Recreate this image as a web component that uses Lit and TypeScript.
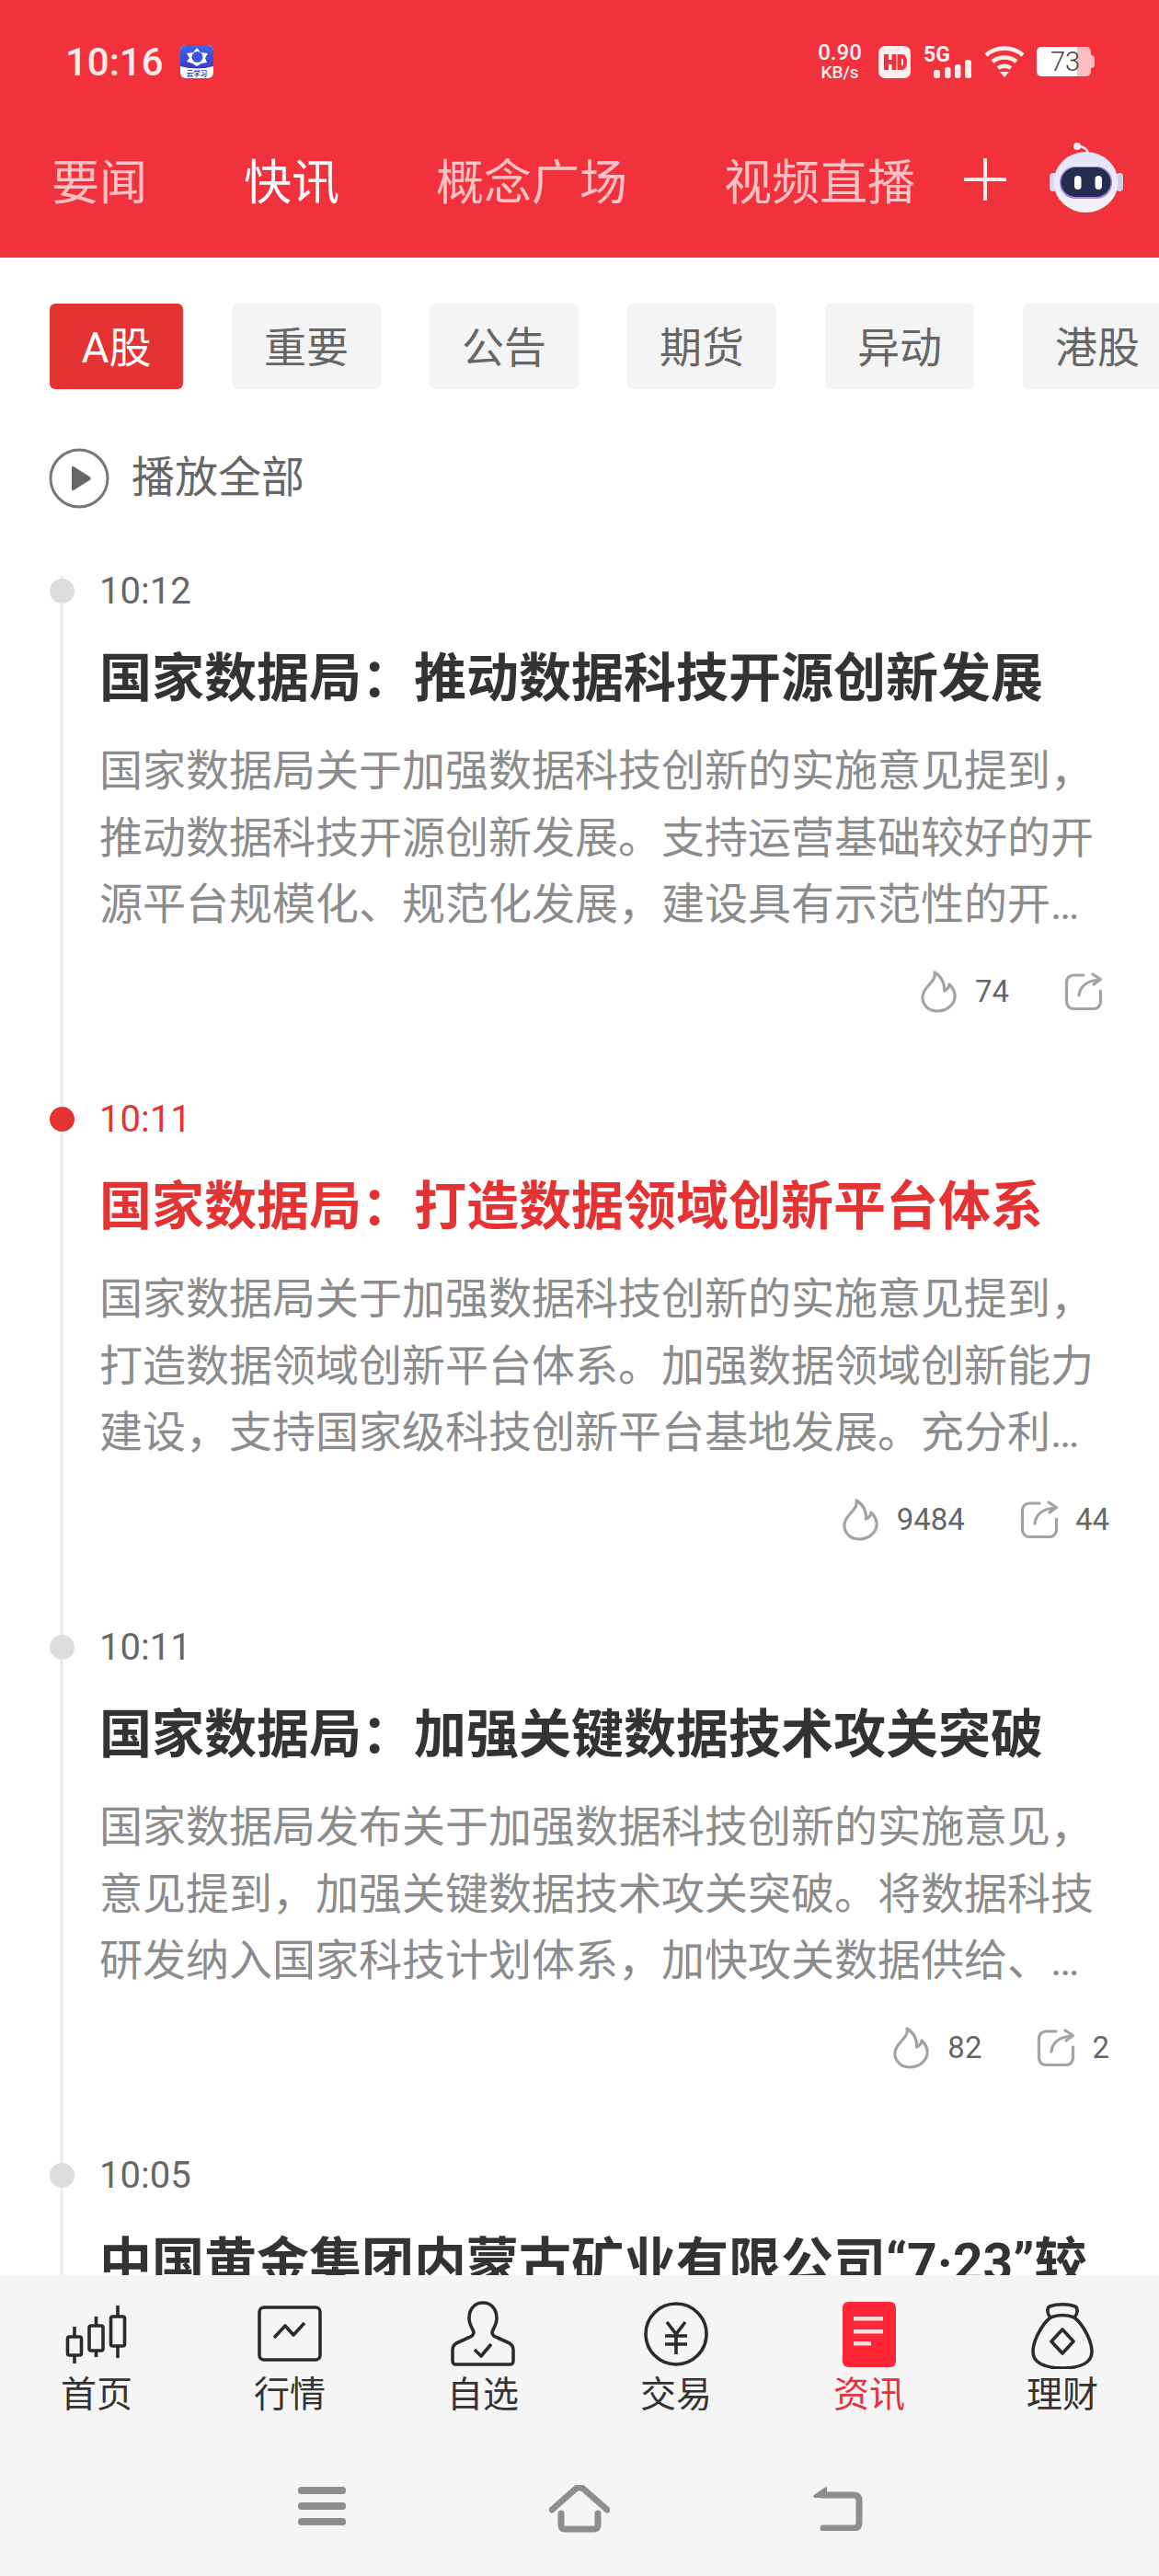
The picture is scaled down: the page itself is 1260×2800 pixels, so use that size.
import { LitElement, html, css, svg } from "lit";
import { customElement } from "lit/decorators.js";

interface Item { time: string; title: string; body: string[]; hot: string; share: string; active?: boolean; }

const items: Item[] = [
  { time: "10:12", title: "国家数据局：推动数据科技开源创新发展", body: ["国家数据局关于加强数据科技创新的实施意见提到，", "推动数据科技开源创新发展。支持运营基础较好的开", "源平台规模化、规范化发展，建设具有示范性的开…"], hot: "74", share: "" },
  { time: "10:11", active: true, title: "国家数据局：打造数据领域创新平台体系", body: ["国家数据局关于加强数据科技创新的实施意见提到，", "打造数据领域创新平台体系。加强数据领域创新能力", "建设，支持国家级科技创新平台基地发展。充分利…"], hot: "9484", share: "44" },
  { time: "10:11", title: "国家数据局：加强关键数据技术攻关突破", body: ["国家数据局发布关于加强数据科技创新的实施意见，", "意见提到，加强关键数据技术攻关突破。将数据科技", "研发纳入国家科技计划体系，加快攻关数据供给、…"], hot: "82", share: "2" },
  { time: "10:05", title: "中国黄金集团内蒙古矿业有限公司“7·23”较", body: [], hot: "", share: "" },
];

const flame = html`<svg class="flame" width="40" height="46" viewBox="0 0 40 46" fill="none" stroke="#a3a3a3" stroke-width="3.2" stroke-linejoin="round"><path d="M16 2C18 10 9 15 5 22C-1 33 7 44 19 44C31 44 39 35 38 26C37.500 21 35 18 32 15C31.500 19 29 21 26.500 22C27.500 14 23 6 16 2Z"/></svg>`;
const share = html`<svg class="share" width="42" height="42" viewBox="0 0 42 42" fill="none" stroke="#a3a3a3" stroke-width="3.2" stroke-linecap="round" stroke-linejoin="round"><path d="M21 3H10A7.500 7.500 0 0 0 2.500 10.500V32A7.500 7.500 0 0 0 10 39.500H32A7.500 7.500 0 0 0 39.500 32V20"/><path d="M16 25C17 16 24 9 38 8M31 2L39.500 7.500L32 13"/></svg>`;

const navIcons = [
  svg`<g fill="none" stroke="#2b2b2b" stroke-width="3.600"><rect x="3.500" y="39" width="15" height="20" rx="2"/><rect x="27" y="27" width="15" height="27" rx="2"/><rect x="50.500" y="17" width="15" height="32" rx="2"/><path d="M11 28V39M11 59V68M34.500 17V27M34.500 54V61M58 5V17M58 49V62"/></g>`,
  svg`<g fill="none" stroke="#2b2b2b" stroke-width="3.600" stroke-linejoin="round"><rect x="2" y="7" width="66" height="57" rx="5"/><path d="M18 40L30 27L39 37L51 24"/></g>`,
  svg`<g fill="none" stroke="#2b2b2b" stroke-width="3.600" stroke-linejoin="round" stroke-linecap="round"><path d="M35 2C25 2 20 10 20 19C20 26 24 30 25 34C25 37 22 39 19 40L6 46C3 48 2 50 2 53V65C2 67 3 69 5 69H65C67 69 68 67 68 65V53C68 50 67 48 64 46L51 40C48 39 45 37 45 34C46 30 50 26 50 19C50 10 45 2 35 2Z"/><path d="M26 53L33 60L44 47" stroke-linecap="butt"/></g>`,
  svg`<g fill="none" stroke="#2b2b2b" stroke-width="3.600"><circle cx="35" cy="36" r="33"/><path d="M25 23L35 36L45 23M23 38H47M23 47H47M35 36V58"/></g>`,
  svg`<rect x="6" y="1" width="58" height="71" rx="6" fill="#ff2638"/><g fill="#fbdde0"><rect x="18" y="17" width="32" height="4.500"/><rect x="18" y="31" width="32" height="4.500"/><rect x="18" y="44" width="19" height="4.500"/></g>`,
  svg`<g fill="none" stroke="#2b2b2b" stroke-width="3.600" stroke-linejoin="round"><path d="M22 18C18 14 18 8 21 6C29 3 41 3 49 6C52 8 52 14 48 18C58 26 67 44 67 55C67 67 55 73 35 73C15 73 3 67 3 55C3 44 12 26 22 18Z"/><path d="M22 18C30 15 40 15 48 18"/><path d="M35 31L47 44L35 57L23 44Z"/></g>`,
];
const navLabels = ["首页", "行情", "自选", "交易", "资讯", "理财"];

@customElement("app-root")
export class AppRoot extends LitElement {
  static styles = css`
    :host { display: block; width: 1260px; height: 2800px; overflow: hidden; background: #fff; font-family: Roboto, "Noto Sans CJK SC", sans-serif; }
    .page { display: flex; flex-direction: column; height: 2800px; }
    .header { flex: none; height: 280px; background: #f1313b; display: flex; flex-direction: column; }
    .status { height: 134px; display: flex; align-items: center; padding: 0 70px 0 71px; box-sizing: border-box; }
    .clock { font-size: 42px; font-weight: 500; color: #ffeaea; letter-spacing: 0; }
    .applogo { margin-left: 18px; display: block; }
    .spacer { flex: 1; }
    .speed { width: 50px; display: flex; flex-direction: column; align-items: center; color: #fff0f0; font-weight: 500; line-height: 1; }
    .speed b { font-size: 24px; font-weight: 500; line-height: 24px; }
    .speed i { font-size: 19px; font-style: normal; line-height: 20px; }
    .hd { margin-left: 17px; }
    .net { margin-left: 14px; }
    .wifi { margin-left: 14px; }
    .battery { margin-left: 13px; position: relative; width: 63px; height: 32px; display: flex; }
    .battery .fill { width: 44px; height: 32px; background: #fff; border-radius: 5px 0 0 5px; }
    .battery .rest { width: 15px; height: 32px; background: #fdbec2; border-radius: 0 5px 5px 0; }
    .battery .tip { width: 4px; height: 14px; margin-top: 9px; background: #fdbec2; border-radius: 0 4px 4px 0; }
    .battery span { position: absolute; left: 15px; top: 1px; font-size: 29px; line-height: 30px; color: #444; font-weight: 300; }
    .tabs { display: flex; align-items: center; height: 132px; padding-left: 56px; }
    .tab { font-size: 52px; line-height: 64px; color: #fdc0c4; margin-right: 105px; white-space: nowrap; }
    .tab.on { color: #fff; }
    .tab.last { margin-right: 0; }
    .plus { margin-left: 53px; display: block; margin-top: -10px; }
    .robot { margin-left: 47px; display: block; margin-top: -14px; }
    .chips { display: flex; gap: 53px; padding: 50px 0 0 54px; overflow: hidden; flex: none; }
    .chip { flex: none; width: 162px; height: 93px; padding-bottom: 5px; box-sizing: border-box; display: flex; align-items: center; justify-content: center; background: #f4f4f4; color: #666; font-size: 46px; border-radius: 6px; }
    .chip.on { width: 145px; background: #e53333; color: #fff; }
    .play { display: flex; align-items: center; gap: 24px; padding: 62px 0 0 53px; color: #666; font-size: 47px; line-height: 62px; flex: none; }
    .playicon { margin-top: 2px; flex: none; display: block; }
    .feedbox { flex: 1; min-height: 0; overflow: hidden; padding: 73px 0 0 65px; }
    .feed { padding-left: 39px; border-left: 4px solid #eeeeee; }
    .item { position: relative; height: 574px; box-sizing: border-box; }
    .dot { position: absolute; left: -54px; top: 3px; width: 27px; height: 27px; border-radius: 50%; background: #dddddd; }
    .time { font-size: 40px; line-height: 34px; color: #666; }
    .title { margin-top: 38px; font-size: 57px; line-height: 80px; font-weight: 700; color: #333; white-space: nowrap; }
    .body { margin-top: 24px; font-size: 47px; line-height: 72.500px; color: #8c8c8c; }
    .body div { white-space: nowrap; }
    .meta { margin-top: 35px; height: 46px; display: flex; justify-content: flex-end; align-items: center; padding-right: 54px; font-size: 33px; color: #666; }
    .flame { display: block; }
    .count { margin-left: 20px; }
    .share { display: block; margin-left: 60px; }
    .scount { margin-left: 18px; }
    .item.on .time, .item.on .title { color: #e53333; }
    .item.on .dot { background: #e53333; }
    .noscount { margin-right: 7px; }
    .bottom { flex: none; height: 327px; background: #f5f5f5; display: flex; flex-direction: column; }
    .nav { display: grid; grid-template-columns: repeat(6, 1fr); padding-top: 28px; }
    .navitem { display: flex; flex-direction: column; align-items: center; color: #333; font-size: 39px; line-height: 46px; }
    .navitem svg { display: block; }
    .navitem span { margin-top: 5px; }
    .navitem.on { color: #e92e3c; }
    .sys { display: flex; justify-content: center; align-items: flex-start; padding-top: 75px; padding-left: 1px; }
    .sys svg { display: block; }
    .sys .home { margin-left: 221px; }
    .sys .back { margin-left: 219px; }
  `;

  private meta(i: Item) {
    if (!i.hot) return null;
    return html`<div class="meta">${flame}<span class="count">${i.hot}</span>${share}${i.share ? html`<span class="scount">${i.share}</span>` : html`<span class="noscount"></span>`}</div>`;
  }

  render() {
    return html`<div class="page">
      <div class="header">
        <div class="status">
          <span class="clock">10:16</span>
          <svg class="applogo" width="36" height="36" viewBox="0 0 36 36">
            <defs><linearGradient id="lg" x1="0" y1="0" x2="0" y2="1"><stop offset="0" stop-color="#3f66ea"/><stop offset="1" stop-color="#3a39c4"/></linearGradient></defs>
            <rect width="36" height="36" rx="6" fill="#fff"/>
            <path d="M0 6a6 6 0 0 1 6-6H30a6 6 0 0 1 6 6V23Q18 28 0 23Z" fill="url(#lg)"/>
            <path d="M18 3L22 8L30 9L27 14L29 19L23 20L18 23L13 20L7 18L10 14L7 9L14 8Z" fill="#fff"/>
            <circle cx="18.500" cy="13" r="6" fill="#3d55dc"/>
            <text x="18" y="33.500" text-anchor="middle" font-size="7.500" font-weight="700" fill="#3a3fd0" font-family="Noto Sans CJK SC, sans-serif">云学习</text>
          </svg>
          <div class="spacer"></div>
          <div class="speed"><b>0.90</b><i>KB/s</i></div>
          <svg class="hd" width="35" height="35" viewBox="0 0 35 35"><rect width="35" height="35" rx="7" fill="#ffecec"/><path d="M6 9H11V15H14.500V9H19.500V26H14.500V20H11V26H6ZM20.500 9H25C29 9 31 12 31 17.500C31 23 29 26 25 26H20.500Z" fill="#f1313b"/><path d="M25 13.500V21.500C26.500 21.500 27 20 27 17.500C27 15 26.500 13.500 25 13.500Z" fill="#ffecec"/></svg>
          <svg class="net" width="52" height="35" viewBox="0 0 52 35" fill="#ffecec"><text x="0" y="17" font-size="23" font-weight="700" font-family="Roboto, sans-serif">5G</text><rect x="11" y="26" width="7" height="9" rx="2.500"/><rect x="23" y="23" width="6.500" height="12" rx="2.500"/><rect x="34" y="20" width="6.500" height="15" rx="2.500"/><rect x="45" y="15" width="7" height="20" rx="2.500"/></svg>
          <svg class="wifi" width="44" height="35" viewBox="0 0 44 35" fill="none" stroke="#ffecec" stroke-width="4.500"><path d="M2 10C13 0 31 0 42 10"/><path d="M9 17C16 11 28 11 35 17"/><path d="M15 24C19 21 25 21 29 24"/><path d="M17 28L22 34L27 28Z" fill="#ffecec" stroke="none"/></svg>
          <div class="battery"><div class="fill"></div><div class="rest"></div><div class="tip"></div><span>73</span></div>
        </div>
        <div class="tabs">
          <span class="tab">要闻</span><span class="tab on">快讯</span><span class="tab">概念广场</span><span class="tab last">视频直播</span>
          <svg class="plus" width="46" height="46" viewBox="0 0 46 46" stroke="#ffeeee" stroke-width="4"><path d="M0 23H46M23 0V46"/></svg>
          <svg class="robot" width="80" height="76" viewBox="0 0 80 76">
            <defs><linearGradient id="rb" x1="0" y1="0" x2="0" y2="1"><stop offset="0" stop-color="#e2e3f6"/><stop offset="1" stop-color="#f4f3fb"/></linearGradient></defs>
            <circle cx="30" cy="4" r="4" fill="#eeeef8"/><path d="M30 4C37 4 41 7 42 12" fill="none" stroke="#eeeef8" stroke-width="2.500"/>
            <rect x="0" y="33" width="8" height="20" rx="4" fill="#d8d8ee"/><rect x="72" y="33" width="8" height="20" rx="4" fill="#cfcfea"/>
            <ellipse cx="39.500" cy="43" rx="35" ry="33" fill="url(#rb)"/>
            <rect x="11" y="26" width="57" height="35" rx="17" fill="#a57fe0"/>
            <rect x="12.500" y="27" width="54" height="32" rx="16" fill="#252c4d"/>
            <rect x="27" y="36" width="7.500" height="15" rx="3.750" fill="#fff"/><rect x="49.500" y="36" width="7.500" height="15" rx="3.750" fill="#fff"/>
          </svg>
        </div>
      </div>
      <div class="chips">
        <div class="chip on">A股</div><div class="chip">重要</div><div class="chip">公告</div><div class="chip">期货</div><div class="chip">异动</div><div class="chip">港股</div>
      </div>
      <div class="play">
        <svg class="playicon" width="66" height="66" viewBox="0 0 66 66" fill="none"><circle cx="33" cy="33" r="31" stroke="#777" stroke-width="3"/><path d="M25 21.500C25 20 26 19.500 27 20L45 31.500C46 32.500 46 33.500 45 34.500L27 46C26 46.500 25 46 25 44.500Z" fill="#666"/></svg>
        <span>播放全部</span>
      </div>
      <div class="feedbox">
        <div class="feed">
        ${items.map((i) => html`<div class="item ${i.active ? "on" : ""}">
          <div class="dot"></div>
          <div class="time">${i.time}</div>
          <div class="title">${i.title}</div>
          <div class="body">${i.body.map((l) => html`<div>${l}</div>`)}</div>
          ${this.meta(i)}
        </div>`)}
        </div>
      </div>
      <div class="bottom">
        <div class="nav">
          ${navLabels.map((l, n) => html`<div class="navitem ${n === 4 ? "on" : ""}"><svg width="70" height="74" viewBox="0 0 70 74">${navIcons[n]}</svg><span>${l}</span></div>`)}
        </div>
        <div class="sys">
          <svg width="52" height="46" viewBox="0 0 52 46" fill="#8e8e8e"><rect y="2" width="52" height="8" rx="3.500"/><rect y="19" width="52" height="8" rx="3.500"/><rect y="36" width="52" height="8" rx="3.500"/></svg>
          <svg class="home" width="66" height="52" viewBox="0 0 66 52" fill="none" stroke="#8e8e8e" stroke-width="7" stroke-linecap="round" stroke-linejoin="round"><path d="M3 27L29 4C31 2.500 35 2.500 37 4L63 27"/><path d="M13 31V44C13 46.500 14.500 48 17 48H49C51.500 48 53 46.500 53 44V31"/></svg>
          <svg class="back" width="56" height="50" viewBox="0 0 56 50" fill="none" stroke="#8e8e8e" stroke-width="7" stroke-linecap="round" stroke-linejoin="round"><path d="M12 11H46C50 11 52 13 52 17V41C52 45 50 47 46 47H13"/><path d="M16 3L3 12L4 13H16V3Z" fill="#8e8e8e" stroke-width="2"/></svg>
        </div>
      </div>
    </div>`;
  }
}
